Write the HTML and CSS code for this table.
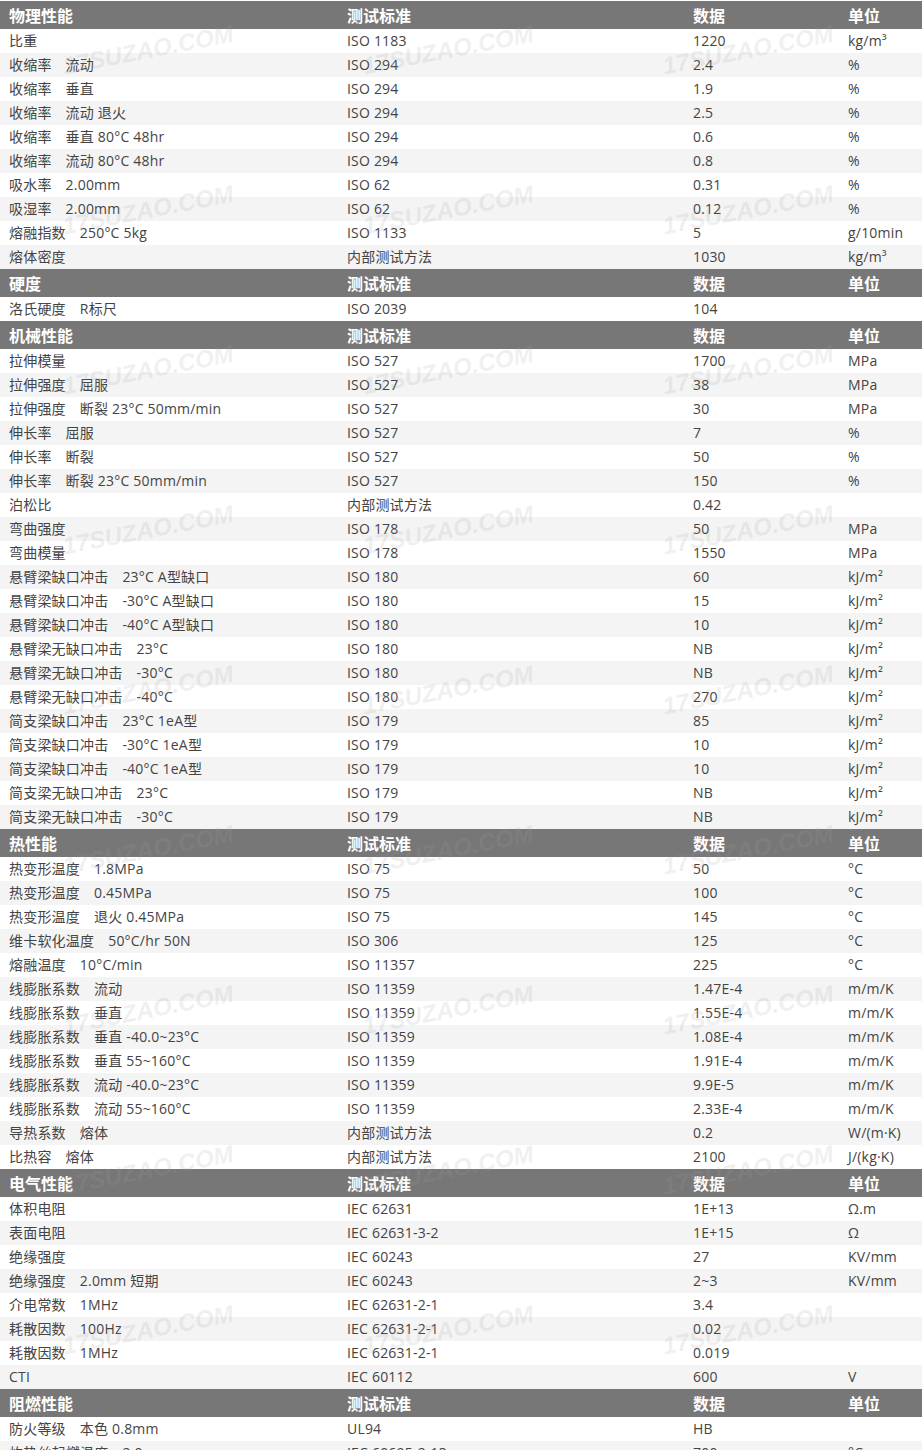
FILE: index.html
```html
<!DOCTYPE html>
<html lang="zh-CN">
<head>
<meta charset="utf-8">
<title>物性表</title>
<link rel="stylesheet" href="styles.css">
</head>
<body>
<div class="page">
<table class="spec">
<colgroup><col class="c1"><col class="c2"><col class="c3"><col class="c4"></colgroup>
<tbody>
<tr class="head"><td>物理性能</td><td>测试标准</td><td>数据</td><td>单位</td></tr>
<tr><td>比重</td><td>ISO 1183</td><td>1220</td><td>kg/m³</td></tr>
<tr><td>收缩率<span class="cond">流动</span></td><td>ISO 294</td><td>2.4</td><td>%</td></tr>
<tr><td>收缩率<span class="cond">垂直</span></td><td>ISO 294</td><td>1.9</td><td>%</td></tr>
<tr><td>收缩率<span class="cond">流动 退火</span></td><td>ISO 294</td><td>2.5</td><td>%</td></tr>
<tr><td>收缩率<span class="cond">垂直 80°C 48hr</span></td><td>ISO 294</td><td>0.6</td><td>%</td></tr>
<tr><td>收缩率<span class="cond">流动 80°C 48hr</span></td><td>ISO 294</td><td>0.8</td><td>%</td></tr>
<tr><td>吸水率<span class="cond">2.00mm</span></td><td>ISO 62</td><td>0.31</td><td>%</td></tr>
<tr><td>吸湿率<span class="cond">2.00mm</span></td><td>ISO 62</td><td>0.12</td><td>%</td></tr>
<tr><td>熔融指数<span class="cond">250°C 5kg</span></td><td>ISO 1133</td><td>5</td><td>g/10min</td></tr>
<tr><td>熔体密度</td><td>内部测试方法</td><td>1030</td><td>kg/m³</td></tr>
</tbody>
<tbody>
<tr class="head"><td>硬度</td><td>测试标准</td><td>数据</td><td>单位</td></tr>
<tr><td>洛氏硬度<span class="cond">R标尺</span></td><td>ISO 2039</td><td>104</td><td></td></tr>
</tbody>
<tbody>
<tr class="head"><td>机械性能</td><td>测试标准</td><td>数据</td><td>单位</td></tr>
<tr><td>拉伸模量</td><td>ISO 527</td><td>1700</td><td>MPa</td></tr>
<tr><td>拉伸强度<span class="cond">屈服</span></td><td>ISO 527</td><td>38</td><td>MPa</td></tr>
<tr><td>拉伸强度<span class="cond">断裂 23°C 50mm/min</span></td><td>ISO 527</td><td>30</td><td>MPa</td></tr>
<tr><td>伸长率<span class="cond">屈服</span></td><td>ISO 527</td><td>7</td><td>%</td></tr>
<tr><td>伸长率<span class="cond">断裂</span></td><td>ISO 527</td><td>50</td><td>%</td></tr>
<tr><td>伸长率<span class="cond">断裂 23°C 50mm/min</span></td><td>ISO 527</td><td>150</td><td>%</td></tr>
<tr><td>泊松比</td><td>内部测试方法</td><td>0.42</td><td></td></tr>
<tr><td>弯曲强度</td><td>ISO 178</td><td>50</td><td>MPa</td></tr>
<tr><td>弯曲模量</td><td>ISO 178</td><td>1550</td><td>MPa</td></tr>
<tr><td>悬臂梁缺口冲击<span class="cond">23°C A型缺口</span></td><td>ISO 180</td><td>60</td><td>kJ/m²</td></tr>
<tr><td>悬臂梁缺口冲击<span class="cond">-30°C A型缺口</span></td><td>ISO 180</td><td>15</td><td>kJ/m²</td></tr>
<tr><td>悬臂梁缺口冲击<span class="cond">-40°C A型缺口</span></td><td>ISO 180</td><td>10</td><td>kJ/m²</td></tr>
<tr><td>悬臂梁无缺口冲击<span class="cond">23°C</span></td><td>ISO 180</td><td>NB</td><td>kJ/m²</td></tr>
<tr><td>悬臂梁无缺口冲击<span class="cond">-30°C</span></td><td>ISO 180</td><td>NB</td><td>kJ/m²</td></tr>
<tr><td>悬臂梁无缺口冲击<span class="cond">-40°C</span></td><td>ISO 180</td><td>270</td><td>kJ/m²</td></tr>
<tr><td>简支梁缺口冲击<span class="cond">23°C 1eA型</span></td><td>ISO 179</td><td>85</td><td>kJ/m²</td></tr>
<tr><td>简支梁缺口冲击<span class="cond">-30°C 1eA型</span></td><td>ISO 179</td><td>10</td><td>kJ/m²</td></tr>
<tr><td>简支梁缺口冲击<span class="cond">-40°C 1eA型</span></td><td>ISO 179</td><td>10</td><td>kJ/m²</td></tr>
<tr><td>简支梁无缺口冲击<span class="cond">23°C</span></td><td>ISO 179</td><td>NB</td><td>kJ/m²</td></tr>
<tr><td>简支梁无缺口冲击<span class="cond">-30°C</span></td><td>ISO 179</td><td>NB</td><td>kJ/m²</td></tr>
</tbody>
<tbody>
<tr class="head"><td>热性能</td><td>测试标准</td><td>数据</td><td>单位</td></tr>
<tr><td>热变形温度<span class="cond">1.8MPa</span></td><td>ISO 75</td><td>50</td><td>°C</td></tr>
<tr><td>热变形温度<span class="cond">0.45MPa</span></td><td>ISO 75</td><td>100</td><td>°C</td></tr>
<tr><td>热变形温度<span class="cond">退火 0.45MPa</span></td><td>ISO 75</td><td>145</td><td>°C</td></tr>
<tr><td>维卡软化温度<span class="cond">50°C/hr 50N</span></td><td>ISO 306</td><td>125</td><td>°C</td></tr>
<tr><td>熔融温度<span class="cond">10°C/min</span></td><td>ISO 11357</td><td>225</td><td>°C</td></tr>
<tr><td>线膨胀系数<span class="cond">流动</span></td><td>ISO 11359</td><td>1.47E-4</td><td>m/m/K</td></tr>
<tr><td>线膨胀系数<span class="cond">垂直</span></td><td>ISO 11359</td><td>1.55E-4</td><td>m/m/K</td></tr>
<tr><td>线膨胀系数<span class="cond">垂直 -40.0~23°C</span></td><td>ISO 11359</td><td>1.08E-4</td><td>m/m/K</td></tr>
<tr><td>线膨胀系数<span class="cond">垂直 55~160°C</span></td><td>ISO 11359</td><td>1.91E-4</td><td>m/m/K</td></tr>
<tr><td>线膨胀系数<span class="cond">流动 -40.0~23°C</span></td><td>ISO 11359</td><td>9.9E-5</td><td>m/m/K</td></tr>
<tr><td>线膨胀系数<span class="cond">流动 55~160°C</span></td><td>ISO 11359</td><td>2.33E-4</td><td>m/m/K</td></tr>
<tr><td>导热系数<span class="cond">熔体</span></td><td>内部测试方法</td><td>0.2</td><td>W/(m·K)</td></tr>
<tr><td>比热容<span class="cond">熔体</span></td><td>内部测试方法</td><td>2100</td><td>J/(kg·K)</td></tr>
</tbody>
<tbody>
<tr class="head"><td>电气性能</td><td>测试标准</td><td>数据</td><td>单位</td></tr>
<tr><td>体积电阻</td><td>IEC 62631</td><td>1E+13</td><td>Ω.m</td></tr>
<tr><td>表面电阻</td><td>IEC 62631-3-2</td><td>1E+15</td><td>Ω</td></tr>
<tr><td>绝缘强度</td><td>IEC 60243</td><td>27</td><td>KV/mm</td></tr>
<tr><td>绝缘强度<span class="cond">2.0mm 短期</span></td><td>IEC 60243</td><td>2~3</td><td>KV/mm</td></tr>
<tr><td>介电常数<span class="cond">1MHz</span></td><td>IEC 62631-2-1</td><td>3.4</td><td></td></tr>
<tr><td>耗散因数<span class="cond">100Hz</span></td><td>IEC 62631-2-1</td><td>0.02</td><td></td></tr>
<tr><td>耗散因数<span class="cond">1MHz</span></td><td>IEC 62631-2-1</td><td>0.019</td><td></td></tr>
<tr><td>CTI</td><td>IEC 60112</td><td>600</td><td>V</td></tr>
</tbody>
<tbody>
<tr class="head"><td>阻燃性能</td><td>测试标准</td><td>数据</td><td>单位</td></tr>
<tr><td>防火等级<span class="cond">本色 0.8mm</span></td><td>UL94</td><td>HB</td><td></td></tr>
<tr><td>灼热丝起燃温度<span class="cond">2.0mm</span></td><td>IEC 60695-2-13</td><td>700</td><td>°C</td></tr>
</tbody>
</table>
<div class="watermarks" aria-hidden="true">
<span>17SUZAO.COM</span><span>17SUZAO.COM</span><span>17SUZAO.COM</span>
<span>17SUZAO.COM</span><span>17SUZAO.COM</span><span>17SUZAO.COM</span>
<span>17SUZAO.COM</span><span>17SUZAO.COM</span><span>17SUZAO.COM</span>
<span>17SUZAO.COM</span><span>17SUZAO.COM</span><span>17SUZAO.COM</span>
<span>17SUZAO.COM</span><span>17SUZAO.COM</span><span>17SUZAO.COM</span>
<span>17SUZAO.COM</span><span>17SUZAO.COM</span><span>17SUZAO.COM</span>
<span>17SUZAO.COM</span><span>17SUZAO.COM</span><span>17SUZAO.COM</span>
<span>17SUZAO.COM</span><span>17SUZAO.COM</span><span>17SUZAO.COM</span>
<span>17SUZAO.COM</span><span>17SUZAO.COM</span><span>17SUZAO.COM</span>
<span>17SUZAO.COM</span><span>17SUZAO.COM</span><span>17SUZAO.COM</span>
</div>
</div>
</body>
</html>
```

FILE: styles.css
```css
html, body {
  margin: 0;
  padding: 0;
  background: #ffffff;
}

body {
  overflow: hidden;
}

.page {
  position: relative;
  width: 922px;
  padding-top: 1px;
  font-family: "Open Sans", "Noto Sans CJK SC", sans-serif;
  font-size: 14px;
  color: #444444;
}

.spec {
  width: 922px;
  table-layout: fixed;
  border-collapse: collapse;
  border-spacing: 0;
}

.c1 { width: 338px; }
.c2 { width: 346px; }
.c3 { width: 155px; }
.c4 { width: 83px; }

.spec td {
  height: 24px;
  padding: 0 0 0 9px;
  line-height: 24px;
  letter-spacing: 0.2px;
  white-space: nowrap;
  overflow: hidden;
  vertical-align: middle;
}

.spec tr:nth-child(odd) {
  background: #f4f4f4;
}

.spec tr.head {
  background: #777777;
}

.spec tr.head td {
  height: 28px;
  line-height: 28px;
  letter-spacing: 0;
  font-family: "Noto Sans CJK SC", sans-serif;
  font-size: 16px;
  font-weight: 700;
  color: #ffffff;
}

.cond {
  margin-left: 14px;
}

.watermarks {
  position: absolute;
  left: -2px;
  top: -30px;
  display: grid;
  grid-template-columns: repeat(3, 300px);
  grid-auto-rows: 160px;
  pointer-events: none;
}

.watermarks span {
  display: flex;
  align-items: center;
  justify-content: center;
  font-family: "Liberation Sans", sans-serif;
  font-size: 24px;
  font-weight: 700;
  font-style: italic;
  color: rgba(160, 160, 160, 0.18);
  transform: rotate(-11deg);
  white-space: nowrap;
}
```
